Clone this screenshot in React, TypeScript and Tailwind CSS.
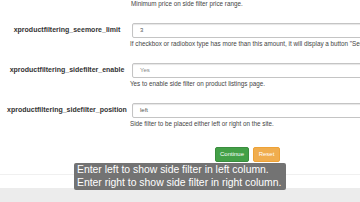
import React from 'react';

const rows = [
  {
    label: 'xproductfiltering_seemore_limit',
    value: '3',
    help: 'If checkbox or radiobox type has more than this amount, it will display a button "See more".',
  },
  {
    label: 'xproductfiltering_sidefilter_enable',
    value: 'Yes',
    help: 'Yes to enable side filter on product listings page.',
    muted: true,
  },
  {
    label: 'xproductfiltering_sidefilter_position',
    value: 'left',
    help: 'Side filter to be placed either left or right on the site.',
  },
];

export default function App() {
  return (
    <div className="relative w-[360px] h-[202px] overflow-hidden bg-white font-['Liberation_Sans',Arial,sans-serif] text-[#333]">
      {/* settings form */}
      <div className="flex flex-col h-[188px]">
        <div className="pl-[131px] pt-[0px] h-[23px] text-[6.3px] leading-[8px] text-[#444] whitespace-nowrap">
          Minimum price on side filter price range.
        </div>
        {rows.map((r) => (
          <div key={r.label} className="h-[40px] flex flex-col">
            <div className="flex items-center h-[15px]">
              <div className="w-[132px] shrink-0 text-center pl-[2px] text-[7px] font-bold whitespace-nowrap">{r.label}</div>
              <div className="flex-1 h-[15px] min-w-[240px] bg-white border border-[#c4c4c4] rounded-[2px] shadow-[inset_0_1px_1px_rgba(0,0,0,0.1)] flex items-center pl-[7px] text-[6px]">
                <span className={r.muted ? 'text-[#888]' : 'text-[#555]'}>{r.value}</span>
              </div>
            </div>
            <div className="pl-[130px] pt-[2px] text-[6.3px] leading-[8px] text-[#444] whitespace-nowrap overflow-hidden">{r.help}</div>
          </div>
        ))}
        <div className="flex gap-[4px] pl-[215px] pt-[4px]">
          <button className="w-[34px] h-[15px] rounded-[2px] bg-[#43a047] border border-[#3a8d3e] text-white text-[6px]">Continue</button>
          <button className="w-[27px] h-[15px] rounded-[2px] bg-[#f0ad4e] border border-[#eea236] text-white text-[6px]">Reset</button>
        </div>
        <div className="mt-[12px] border-t border-[#f0f0f0]" />
      </div>
      <div className="h-[14px] bg-[#ececec]" />

      {/* subtitle caption */}
      <div className="absolute left-[74px] top-[163px] w-[212px] rounded-[2px] bg-[#6b6b6b]/95 pl-[3px] py-[1px] text-white text-[10.4px] leading-[12.5px] whitespace-nowrap">
        <div>Enter left to show side filter in left column.</div>
        <div>Enter right to show side filter in right column.</div>
      </div>
    </div>
  );
}
